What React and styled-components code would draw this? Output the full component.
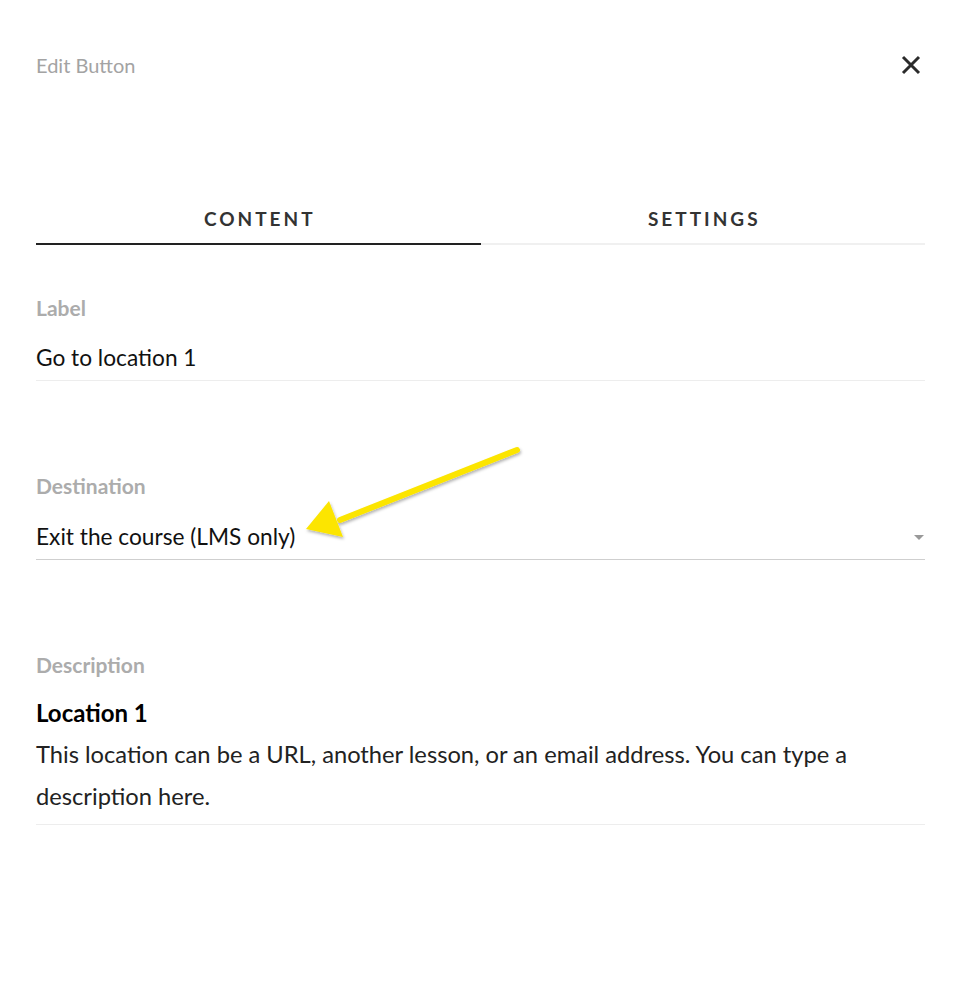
import styled, { createGlobalStyle } from "styled-components";

const Global = createGlobalStyle`
	html, body {
		margin: 0;
		background: #fff;
		font-family: Lato, "Open Sans", sans-serif;
	}
`;

const Panel = styled.div`
	position: relative;
	padding: 35px 28px 0 36px;
	height: 964px;
	box-sizing: border-box;
`;

const Header = styled.div`
	display: flex;
	align-items: center;
	justify-content: space-between;
	height: 60px;
`;

const Title = styled.div`
	font-size: 20px;
	color: #a3a3a3;
`;

const CloseButton = styled.button`
	display: flex;
	align-items: center;
	justify-content: center;
	width: 24px;
	height: 24px;
	margin-right: 2px;
	padding: 0;
	border: 0;
	background: none;
	cursor: pointer;
`;

const Tabs = styled.div`
	display: grid;
	grid-template-columns: 1fr 1fr;
	margin-top: 100px;
`;

const Tab = styled.div`
	height: 48px;
	line-height: 48px;
	text-align: center;
	font-size: 19px;
	font-weight: 700;
	letter-spacing: 3px;
	text-indent: 3px;
	color: #333;
	border-bottom: 2px solid ${p => (p.$active ? "#222" : "#f0f0f0")};
`;

const Field = styled.div`
	margin-top: ${p => p.$top}px;
	padding-bottom: 7px;
	border-bottom: 1px solid ${p => p.$line};
`;

const FieldLabel = styled.div`
	font-size: 21px;
	font-weight: 700;
	line-height: 24px;
	color: #acacac;
	margin-bottom: ${p => p.$gap}px;
`;

const Value = styled.div`
	display: flex;
	align-items: center;
	justify-content: space-between;
	font-size: 22.7px;
	line-height: 30px;
	color: #111;
`;

const Caret = styled.span`
	width: 0;
	height: 0;
	margin-right: 1px;
	border-left: 5px solid transparent;
	border-right: 5px solid transparent;
	border-top: 5px solid #999;
`;

const Heading = styled.div`
	font-size: 24px;
	font-weight: 700;
	line-height: 30px;
	color: #000;
`;

const Paragraph = styled.p`
	margin: 5px 0 0;
	font-size: 23.7px;
	line-height: 42px;
	color: #222;
`;

const Pointer = styled.svg`
	position: absolute;
	left: 290px;
	top: 435px;
	overflow: visible;
`;

export default function App() {
	return (
		<>
			<Global />
			<Panel>
				<Header>
					<Title>Edit Button</Title>
					<CloseButton aria-label="Close">
						<svg width="20" height="20" viewBox="0 0 20 20">
							<path d="M2 2 L18 18 M18 2 L2 18" stroke="#2b2b2b" strokeWidth="3" />
						</svg>
					</CloseButton>
				</Header>

				<Tabs>
					<Tab $active>CONTENT</Tab>
					<Tab>SETTINGS</Tab>
				</Tabs>

				<Field $top={51} $line="#ededed">
					<FieldLabel $gap={23}>Label</FieldLabel>
					<Value>Go to location 1</Value>
				</Field>

				<Field $top={93} $line="#cfcfcf">
					<FieldLabel $gap={24}>Destination</FieldLabel>
					<Value>
						Exit the course (LMS only)
						<Caret />
					</Value>
				</Field>

				<Field $top={93} $line="#ededed">
					<FieldLabel $gap={21}>Description</FieldLabel>
					<Heading>Location 1</Heading>
					<Paragraph>
						This location can be a URL, another lesson, or an email address. You can type a description here.
					</Paragraph>
				</Field>

				<Pointer width="240" height="110" viewBox="0 0 240 110">
					<defs>
						<filter id="shadow" x="-20%" y="-20%" width="140%" height="140%">
							<feDropShadow dx="1" dy="2" stdDeviation="1.5" floodColor="#000" floodOpacity="0.3" />
						</filter>
					</defs>
					<g filter="url(#shadow)">
						<path d="M227 15 L50 85" stroke="#fce500" strokeWidth="6" strokeLinecap="round" />
						<polygon points="16,94 39,66 53,102" fill="#fce500" />
					</g>
				</Pointer>
			</Panel>
		</>
	);
}
